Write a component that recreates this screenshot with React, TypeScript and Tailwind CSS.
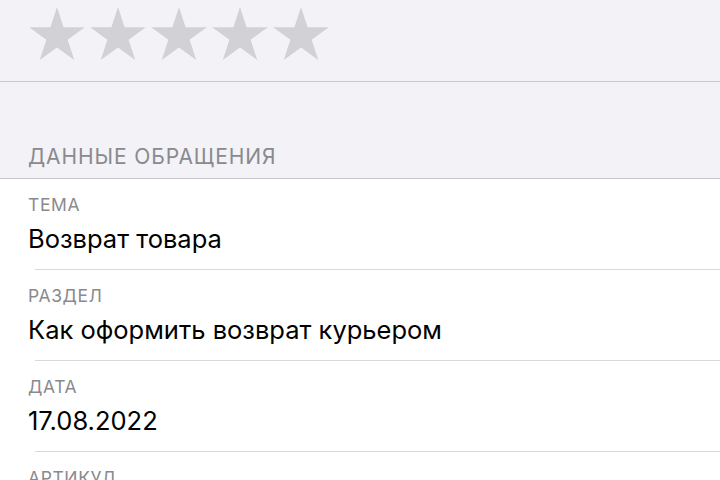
import React from 'react';

const Star: React.FC = () => (
  <svg width="56" height="53" viewBox="-0.951 -1 1.902 1.809" className="shrink-0">
    <polygon
      fill="#d1d1d6"
      points="0,-1 0.2245,-0.309 0.951,-0.309 0.363,0.118 0.588,0.809 0,0.382 -0.588,0.809 -0.363,0.118 -0.951,-0.309 -0.2245,-0.309"
    />
  </svg>
);

const rows = [
  { label: 'ТЕМА', value: 'Возврат товара' },
  { label: 'РАЗДЕЛ', value: 'Как оформить возврат курьером' },
  { label: 'ДАТА', value: '17.08.2022' },
  { label: 'АРТИКУЛ', value: '' },
];

export default function App() {
  return (
    <div
      className="w-[720px] h-[480px] overflow-hidden bg-[#f2f2f7]"
      style={{ fontFamily: 'Inter, "Noto Sans", sans-serif' }}
    >
      {/* Rating */}
      <div className="h-[82px] border-b border-[#c8c7cc] pl-[29px] pt-[7px] flex gap-[5px]">
        {[0, 1, 2, 3, 4].map((i) => (
          <Star key={i} />
        ))}
      </div>

      {/* Section header */}
      <div className="h-[96px] flex items-end pl-[28px] pb-[9px]">
        <span className="text-[21px] leading-[24px] text-[#8a8a8e] tracking-[0.9px]">
          ДАННЫЕ ОБРАЩЕНИЯ
        </span>
      </div>

      {/* Details */}
      <div className="bg-white border-t border-[#c8c7cc]">
        {rows.map((r) => (
          <div key={r.label}>
            <div className="h-[90px] pt-[16px] pl-[28px]">
              <div className="text-[17.5px] leading-[20px] tracking-[0.6px] text-[#8a8a8e]">{r.label}</div>
              <div className="mt-[8px] text-[25.5px] leading-[32px] text-black">{r.value}</div>
            </div>
            <div className="ml-[35px] h-px bg-[#d9d9dd]" />
          </div>
        ))}
      </div>
    </div>
  );
}
